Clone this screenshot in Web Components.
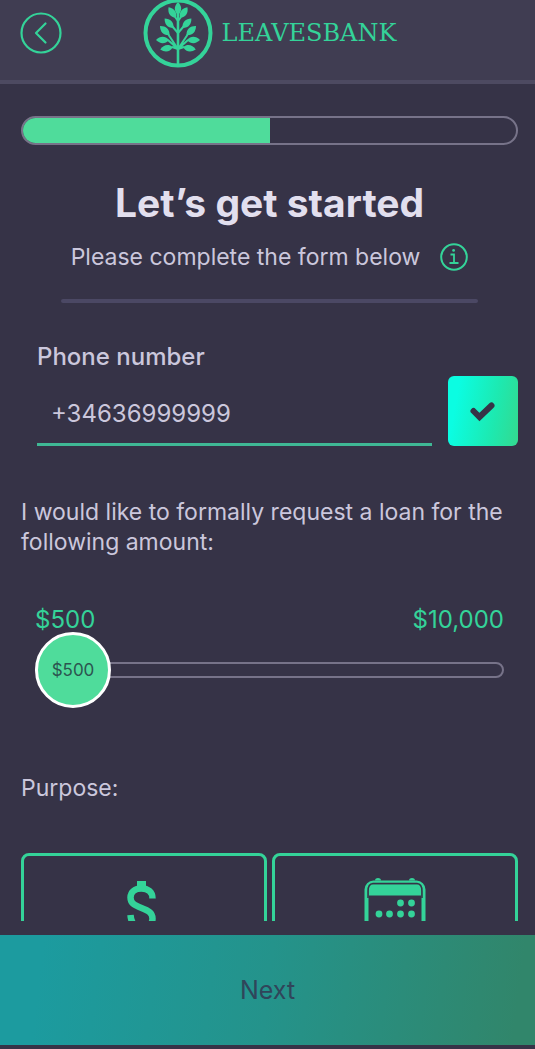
<!DOCTYPE html>
<html lang="en">
<head>
<meta charset="utf-8">
<meta name="viewport" content="width=device-width, initial-scale=1">
<title>Leavesbank – Loan request</title>
<style>
  body {
    margin: 0;
    background: #363347;
    color: #cbc7dc;
    font: 23px/30px Inter, "Liberation Sans", sans-serif;
    --green: #34d399;
    --mint: #4fdc9b;
    --ink: #363347;
    --outline: #777389;
  }
</style>
</head>
<body>
<loan-app></loan-app>
<script>
const define = (name, html, setup) => {
  const template = document.createElement('template');
  template.innerHTML = html;
  customElements.define(name, class extends HTMLElement {
    constructor() {
      super();
      this.attachShadow({ mode: 'open' }).append(template.content.cloneNode(true));
    }
    connectedCallback() { if (setup) setup(this, this.shadowRoot); }
  });
};

define('leaves-logo', `
  <style>
    :host { display: flex; align-items: center; gap: 9px; color: var(--green); }
    svg { display: block; width: 70px; height: 70px; flex: none; }
    span { font: 24px/30px "DejaVu Serif", serif; }
  </style>
  <svg viewBox="0 0 70 70" aria-hidden="true">
    <defs><path id="leaf" d="M0 0C-4.500 -4 -4 -9 0 -13C4 -9 4.500 -4 0 0Z" fill="currentColor"/></defs>
    <circle cx="35" cy="35" r="32.5" fill="none" stroke="currentColor" stroke-width="4"/>
    <g fill="none" stroke="currentColor" stroke-width="2">
      <path d="M35 12V66" stroke-width="2.6"/>
      <path d="M35 23L38 19M35 23L32 19M35 35L41 28M35 35L29 28M35 51L45 36M35 51L25 36M35 51L45 42M35 51L25 42M35 51L41 49M35 51L29 49"/>
    </g>
    <use href="#leaf" transform="translate(35 17)"/>
    <use href="#leaf" transform="translate(37 20) rotate(35)"/>
    <use href="#leaf" transform="translate(33 20) rotate(-35)"/>
    <use href="#leaf" transform="translate(39.500 30) rotate(43)"/>
    <use href="#leaf" transform="translate(30.500 30) rotate(-43)"/>
    <use href="#leaf" transform="translate(43.500 37) rotate(47)"/>
    <use href="#leaf" transform="translate(26.500 37) rotate(-47)"/>
    <use href="#leaf" transform="translate(44 42) rotate(90)"/>
    <use href="#leaf" transform="translate(26 42) rotate(-90)"/>
    <use href="#leaf" transform="translate(40 49) rotate(101)"/>
    <use href="#leaf" transform="translate(30 49) rotate(-101)"/>
  </svg>
  <span>LEAVESBANK</span>`);

define('app-header', `
  <style>
    :host { display: block; background: #403d52; border-bottom: 4px solid #4d4a61; }
    header { display: grid; grid-template-columns: 42px 1fr 42px; align-items: center; padding: 0 16px 14px 20px; height: 66px; }
    button { width: 42px; height: 42px; padding: 0; border: 0; background: none; color: var(--green); }
    svg { display: block; }
    leaves-logo { justify-self: center; height: 66px; }
  </style>
  <header>
    <button type="button" aria-label="Back">
      <svg width="42" height="42" viewBox="0 0 42 42" fill="none" stroke="currentColor" stroke-width="2.2">
        <circle cx="21" cy="21" r="19.5"/>
        <path d="M25.5 11.5L16 21L25.5 30.5" stroke-linecap="round" stroke-linejoin="round"/>
      </svg>
    </button>
    <leaves-logo></leaves-logo>
  </header>`);

define('step-progress', `
  <style>
    :host { display: block; }
    div { box-sizing: border-box; height: 29px; border: 2px solid var(--outline); border-radius: 15px; overflow: hidden; }
    i { display: block; width: 50%; height: 100%; background: var(--mint); }
  </style>
  <div role="progressbar" aria-label="Progress" aria-valuenow="50" aria-valuemin="0" aria-valuemax="100"><i></i></div>`);

define('form-intro', `
  <style>
    :host { display: block; padding: 0 40px; text-align: center; }
    h1 { margin: 0 0 15px; font-size: 39px; line-height: 48px; font-weight: 700; color: #e2dfee; }
    .sub { display: flex; justify-content: center; align-items: center; gap: 20px; }
    p { margin: 0; white-space: nowrap; }
    button { width: 28px; height: 28px; padding: 0; border: 0; background: none; color: var(--green); flex: none; }
    svg { display: block; }
    hr { height: 4px; margin: 27px 0 0; border: 0; border-radius: 2px; background: #4b4864; }
  </style>
  <h1><slot name="title"></slot></h1>
  <div class="sub">
    <p><slot></slot></p>
    <button type="button" aria-label="Information">
      <svg width="28" height="28" viewBox="0 0 28 28" fill="none" stroke="currentColor" stroke-width="2">
        <circle cx="14" cy="14" r="12.8"/>
        <path d="M10.5 11.5H14V20M9.5 20H18.5" stroke-width="1.8"/>
        <circle cx="13.6" cy="7.4" r="1.4" fill="currentColor" stroke="none"/>
      </svg>
    </button>
  </div>
  <hr>`);

define('phone-field', `
  <style>
    :host { display: block; font-size: 24px; }
    label { display: block; margin: 0 16px 4px; font-weight: 500; }
    div { display: flex; gap: 16px; }
    input { flex: 1; min-width: 0; box-sizing: border-box; height: 70px; margin-left: 16px; padding: 8px 14px 0; border: 0; border-bottom: 3px solid #3fb895; border-radius: 0; outline: 0; background: none; color: inherit; font: inherit; }
    button { width: 70px; height: 70px; padding: 0; border: 0; border-radius: 6px; background: linear-gradient(100deg, #0bfde2 15%, #1de9b0 65%, #34d98f); color: var(--ink); flex: none; }
    svg { display: block; margin: auto; }
  </style>
  <label for="phone">Phone number</label>
  <div>
    <input id="phone" type="tel" value="+34636999999">
    <button type="button" aria-label="Confirm phone number">
      <svg width="28" height="24" viewBox="0 0 28 24" fill="none" stroke="currentColor" stroke-width="6"><path d="M4.500 12L10.500 18L22.500 6.500" stroke-linecap="round"/></svg>
    </button>
  </div>`);

define('amount-slider', `
  <style>
    :host { display: block; padding: 0 14px; }
    .limits { display: flex; justify-content: space-between; font-size: 24px; color: var(--green); }
    .track { position: relative; height: 76px; margin-top: -3px; }
    input { -webkit-appearance: none; appearance: none; display: block; width: 100%; height: 76px; margin: 0; background: none; outline: 0; }
    input::-webkit-slider-runnable-track { box-sizing: border-box; height: 16px; border: 2px solid var(--outline); border-radius: 8px; }
    input::-webkit-slider-thumb { -webkit-appearance: none; box-sizing: border-box; width: 76px; height: 76px; margin: -32px 0 0 -2px; border: 3px solid #fff; border-radius: 50%; background: var(--mint); }
    output { position: absolute; left: 0; top: 0; width: 76px; text-align: center; font-size: 17px; line-height: 76px; color: #2c5550; pointer-events: none; }
  </style>
  <div class="limits"><span>$500</span><span>$10,000</span></div>
  <div class="track">
    <input id="amount" type="range" min="500" max="10000" step="100" value="500" aria-label="Loan amount">
    <output for="amount">$500</output>
  </div>`, (host, root) => {
  const input = root.querySelector('input'), output = root.querySelector('output');
  input.addEventListener('input', () => {
    const share = (input.value - input.min) / (input.max - input.min);
    output.textContent = '$' + Number(input.value).toLocaleString('en-US');
    output.style.left = `calc((100% - 76px) * ${share})`;
  });
});

define('purpose-card', `
  <style>
    :host { display: block; }
    button { display: flex; justify-content: center; align-items: flex-start; box-sizing: border-box; width: 100%; height: 160px; padding: 22px 0 0; border: 3px solid var(--green); border-radius: 8px; background: none; color: var(--green); font: inherit; }
  </style>
  <button type="button"><slot></slot></button>`, (host, root) => {
  root.querySelector('button').setAttribute('aria-label', host.getAttribute('label'));
});

define('loan-form', `
  <style>
    :host { display: block; padding: 32px 17px 0 21px; }
    form-intro { margin-top: 34px; }
    phone-field { margin-top: 39px; }
    p { margin: 51px 0 0; }
    amount-slider { margin-top: 48px; }
    .purpose { margin-top: 65px; }
    .cards { display: grid; grid-template-columns: 1fr 1fr; gap: 5px; margin-top: 50px; }
    svg { display: block; }
  </style>
  <step-progress></step-progress>
  <form-intro><span slot="title">Let’s get started</span>Please complete the form below</form-intro>
  <phone-field></phone-field>
  <p>I would like to formally request a loan for the following amount:</p>
  <amount-slider></amount-slider>
  <p class="purpose">Purpose:</p>
  <div class="cards">
    <purpose-card label="Money">
      <svg width="36" height="60" viewBox="0 0 36 60" fill="none" stroke="currentColor">
        <path d="M15.500 3V11M15.500 49V57" stroke-width="9"/>
        <path d="M26.500 20.500C26.500 14 22 10.500 15.500 10.500C9 10.500 4.500 14 4.500 19.500C4.500 25.500 9 27.500 15.500 30C22 32.500 26.500 34.500 26.500 40.500C26.500 46 22 49.500 15.500 49.500C9 49.500 5 45 4.500 37" stroke-width="6.500"/>
      </svg>
    </purpose-card>
    <purpose-card label="Calendar">
      <svg width="62" height="64" viewBox="0 0 62 64">
        <rect x="2.5" y="4.5" width="57" height="57" rx="7" fill="none" stroke="currentColor" stroke-width="4"/>
        <path d="M11 2.5a3 2.5 0 0 1 6 0zM45 2.5a3 2.5 0 0 1 6 0z" fill="currentColor"/>
        <path d="M8 6.5H54Q57 6.500 57 9.500V17.500H5V9.500Q5 6.500 8 6.500Z" fill="currentColor"/>
        <path d="M4 20V13Q4 6 9 5.500H53Q58 6 58 13V20" fill="none" stroke="#363347" stroke-width="1.500"/>
        <g fill="currentColor">
          <circle cx="36.500" cy="25" r="3.400"/><circle cx="47.500" cy="25" r="3.400"/>
          <circle cx="15" cy="36" r="3.400"/><circle cx="25.500" cy="36" r="3.400"/><circle cx="36.500" cy="36" r="3.400"/><circle cx="47.500" cy="36" r="3.400"/>
          <circle cx="15" cy="47" r="3.400"/><circle cx="25.500" cy="47" r="3.400"/><circle cx="36.500" cy="47" r="3.400"/>
        </g>
      </svg>
    </purpose-card>
  </div>`);

define('next-bar', `
  <style>
    :host { display: block; padding: 14px 0 4px; }
    button { display: block; width: 100%; height: 110px; padding: 0; border: 0; background: linear-gradient(97deg, #1c9b9f 8%, #24938b 50%, #31866b 96%); color: #30455a; font: inherit; font-size: 25px; }
  </style>
  <button type="button">Next</button>`);

define('loan-app', `
  <style>
    :host { display: flex; flex-direction: column; height: 100vh; overflow: hidden; }
    app-header, next-bar { flex: none; }
    main { flex: 1; min-height: 0; overflow: hidden auto; scrollbar-width: none; }
  </style>
  <app-header></app-header>
  <main><loan-form></loan-form></main>
  <next-bar></next-bar>`);
</script>
</body>
</html>
